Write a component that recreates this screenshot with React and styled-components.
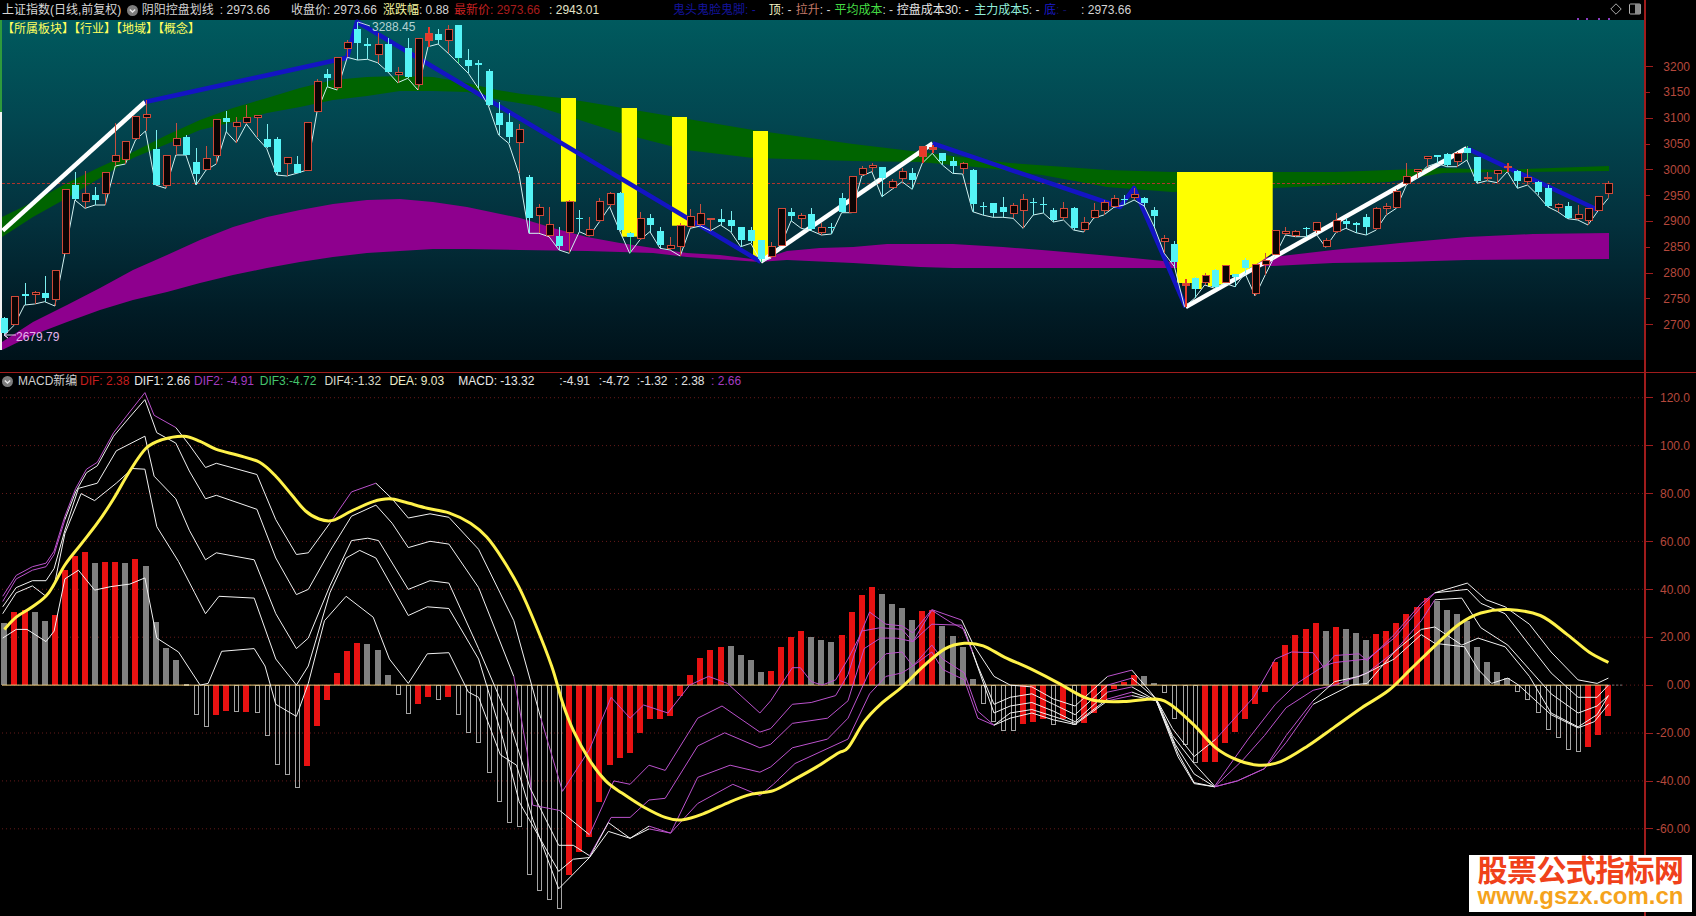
import React from 'react'
import styled, { createGlobalStyle } from 'styled-components'

const AXIS_RED = '#a01c1c'
const LABEL_RED = '#b5483c'
const BAND_GREEN = '#006400'
const BAND_PURPLE = '#8e008e'
const BLUE = '#1414c4'
const CYAN = '#55f4f6'
const WHITE = '#f2f2f2'
const PURPLE = '#bb52cc'

const GlobalStyle = createGlobalStyle`
  html, body {
    margin: 0;
    padding: 0;
    background: #000;
    overflow: hidden;
  }
  body {
    font-family: "Liberation Sans", "Noto Sans CJK SC", sans-serif;
    font-size: 12px;
  }
`

const Page = styled.div`
  position: relative;
  width: 1696px;
  height: 916px;
  background: #000;
  display: flex;
  flex-direction: column;
  overflow: hidden;
`
const Pane = styled.section`
  display: grid;
  grid-template-columns: 1644px 52px;
  height: ${props => props.$height}px;
`
const PaneMain = styled.div`
  display: flex;
  flex-direction: column;
  min-width: 0;
`
const PaneGap = styled.div`
  height: 13px;
  box-sizing: border-box;
  border-bottom: 1px solid ${AXIS_RED};
  background: linear-gradient(${AXIS_RED}, ${AXIS_RED}) 1644px 0 / 2px 100% no-repeat;
`
const HeaderBar = styled.header`
  position: relative;
  height: 20px;
  box-sizing: border-box;
  flex: none;
  display: flex;
  align-items: center;
  padding-left: 2px;
  padding-bottom: ${props => props.$lift || 0}px;
  white-space: nowrap;
  line-height: 16px;
`
const Field = styled.span`
  flex: none;
  margin-left: ${props => props.$ml || 0}px;
  color: ${props => props.$color || '#d4d4d4'};
`
const IconSlot = styled.span`
  flex: none;
  display: flex;
  margin-left: ${props => props.$ml || 0}px;
`
const Value = styled.span`
  color: ${props => props.$color || '#d4d4d4'};
`
const ToolIcons = styled.div`
  position: absolute;
  top: 3px;
  right: 3px;
  display: flex;
  align-items: center;
  gap: 7px;
`
const ChartArea = styled.div`
  position: relative;
  flex: 1;
  background: ${props => props.$bg};
`
const ChartSvg = styled.svg`
  display: block;
  overflow: visible;
`
const ChartLabel = styled.text`
  fill: ${props => props.$color};
  font-size: 12px;
`
const SectorTags = styled.div`
  position: absolute;
  left: 2px;
  top: 1px;
  line-height: 17px;
  color: #ffff5e;
  white-space: nowrap;
`
const Axis = styled.aside`
  border-left: 2px solid ${AXIS_RED};
  padding-top: ${props => props.$top}px;
  box-sizing: border-box;
  display: flex;
  flex-direction: column;
`
const AxisRow = styled.div`
  flex: none;
  height: ${props => props.$step}px;
  display: flex;
  align-items: center;
  justify-content: space-between;
  padding-right: 6px;
  color: ${LABEL_RED};

  &::before {
    content: '';
    width: ${props => (props.$major ? 7 : 4)}px;
    height: 1px;
    background: ${AXIS_RED};
  }
`
const Watermark = styled.div`
  position: absolute;
  left: 1469px;
  top: 855px;
  width: 223px;
  height: 57px;
  background: #fff;
  display: flex;
  flex-direction: column;
  align-items: center;
  font-weight: 700;
`
const WatermarkTitle = styled.div`
  color: #f0411a;
  font-size: 30px;
  line-height: 32px;
  letter-spacing: -0.6px;
  font-family: "Liberation Sans", "Noto Sans CJK SC", sans-serif;
`
const WatermarkUrl = styled.div`
  color: #f5a31c;
  font-size: 24px;
  line-height: 18px;
  font-family: "Liberation Sans", sans-serif;
`

// candle tables are [kind, high, top, bottom, low], y traced from the reference crops
const CANDLES_A = [
  ['d',890,895,940,945],['u',830,830,913,915],['d',790,822,828,855],['u',812,818,822,852],['d',768,820,835,845],
  ['u',752,752,838,858],['u',508,508,700,700],['d',455,495,538,540],['u',452,520,543,565],['d',502,525,540,555],
  ['u',458,458,520,555],['u',310,406,425,438],['u',364,364,418,432],['u',290,290,356,360],['u',240,284,291,333],
  ['d',330,388,495,495],['u',406,406,497,505],['u',308,355,375,405],['d',345,352,405,405],['d',385,427,462,495],
  ['u',378,416,448,450],['u',298,298,406,432],['d',272,294,305,335],['u',292,308,320,368],['u',255,292,306,312],
  ['u',285,286,292,352],['d',312,358,382,385],['d',350,357,455,465],['u',410,412,430,468],['d',408,433,458,460],
  ['u',308,308,450,450],['u',178,184,275,275],['d',148,162,174,200],['u',112,112,203,210],['u',60,68,86,112],
  ['d',5,28,70,120],['d',55,72,78,118],['u',40,73,102,128],['d',55,72,155,155],['u',140,157,163,188],
  ['d',55,85,170,175],['u',55,55,193,210],['r',20,40,62,80],['d',28,42,60,72],['u',15,28,62,100],
  ['g',15,15,115,130],['d',88,120,138,160],['d',120,130,134,205],['d',148,153,255,258],['d',245,280,315,345],
  ['d',280,307,350,370],['u',312,328,368,460],
]
const CANDLES_B = [
  ['d',225,232,354,400],['u',312,322,345,400],['u',322,374,405,410],['d',380,408,438,450],['u',300,305,396,460],
  ['d',330,353,357,395],['u',352,388,406,408],['u',295,304,360,365],['u',275,279,313,320],['d',275,278,390,392],
  ['g',395,398,410,460],['u',335,355,415,420],['d',342,355,375,395],['d',380,392,435,445],['u',410,436,446,450],
  ['u',368,376,438,468],['u',328,350,380,385],['u',312,341,374,378],['u',355,355,358,392],['d',328,358,365,375],
  ['d',332,361,377,395],['d',381,382,420,440],['d',380,391,422,430],['g',420,421,476,485],['u',425,440,468,475],
  ['u',326,326,436,436],['d',325,336,348,362],['u',338,346,356,385],['d',325,343,388,392],['u',368,383,396,405],
  ['d',368,380,382,402],['d',280,295,335,338],['u',228,230,338,338],['u',198,205,224,228],['u',190,197,202,215],
  ['d',200,202,235,290],['u',238,245,263,268],['u',205,215,236,245],['d',205,220,240,268],['r',138,140,168,190],
  ['r',135,142,148,160],['d',158,160,182,195],['d',172,184,197,220],['u',185,190,204,222],['d',208,210,312,335],
  ['d',305,319,321,345],['d',308,310,339,352],['d',292,320,335,352],['u',308,317,340,355],['u',282,298,330,385],
  ['d',295,306,308,345],
]
const CANDLES_C = [
  ['d',230,252,254,279],['d',264,270,300,306],['u',246,264,291,300],['d',261,264,324,330],['u',291,306,327,336],
  ['u',249,270,291,294],['u',240,248,270,285],['u',225,235,260,262],['d',225,236,240,255],['u',205,223,233,240],
  ['d',232,235,250,258],['d',262,270,288,320],['u',345,355,365,400],['d',362,372,425,440],['r',478,490,497,560],
  ['d',470,475,508,535],['u',460,466,488,495],['d',448,450,500,505],['u',435,436,488,490],['d',462,463,470,500],
  ['d',415,420,445,460],['u',432,434,520,528],['u',400,422,433,465],['u',332,332,403,405],['u',320,333,340,345],
  ['u',330,334,345,350],['d',322,323,325,350],['u',305,308,330,340],['u',355,362,380,382],['u',278,302,334,338],
  ['d',295,302,312,325],['d',305,310,316,338],['d',282,292,322,345],['u',262,265,325,330],['u',250,258,264,285],
  ['u',208,214,262,265],['u',128,170,190,195],['u',148,148,155,175],['u',108,110,116,140],['d',105,106,112,130],
  ['d',100,102,135,140],['u',96,100,124,140],['g',78,85,98,120],['d',110,112,184,190],['u',155,172,175,182],
  ['u',150,152,160,188],['r',130,140,143,155],['d',150,152,182,205],['u',148,172,183,195],['d',183,185,215,225],
  ['d',195,205,258,260],['u',250,254,262,275],['d',247,258,293,296],['u',255,284,296,300],['u',266,266,301,315],
  ['u',230,230,270,272],['u',182,190,220,235],
]

const toPageY = (table, base) =>
  table.map(([kind, ...ys]) => [kind, ...ys.map(y => base + y / 3)])

const CANDLES = [
  ...toPageY(CANDLES_A, 20),
  ...toPageY(CANDLES_B, 100),
  ...toPageY(CANDLES_C, 120),
]

const candleX = i => 4.33 + 10.087 * i

const CLOSE_LINE = CANDLES.map((c, i) => `${candleX(i).toFixed(1)},${c[4].toFixed(1)}`).join(' ')

const GREEN_BAND = '2,217 33,202 67,183 100,167 133,152 167,135 200,120 233,108 267,98 300,88 333,80 367,77 400,76 433,77 467,83 497,90 522,94 562,98 587,102 676,117 753,130 853,144 920,152 1010,163 1107,170 1172,172 1275,172 1335,172 1389,170 1443,168 1497,170 1524,169 1609,166 1609,171 1524,172 1497,172 1443,173 1389,182 1335,185 1275,188 1172,192 1107,187 1042,175 986,168 920,162 853,161 753,158 686,150 620,133 536,106 500,100 467,92 433,91 400,91 367,96 333,100 300,107 267,113 233,122 200,130 167,144 133,158 100,178 67,198 33,217 2,237'
const PURPLE_BAND = '2,342 33,322 67,305 100,288 133,270 167,255 200,240 233,227 267,217 300,210 333,204 367,200 400,199 433,202 467,207 520,218 553,228 587,237 620,243 653,248 687,253 720,255 760,260 787,251 820,248 853,247 887,244 953,244 1003,247 1042,250 1100,255 1133,258 1173,262 1273,257 1333,250 1400,243 1467,237 1533,234 1609,233 1609,259 1467,260 1400,262 1333,263 1273,266 1173,268 1133,268 1100,268 1042,268 1003,268 953,268 920,267 853,263 787,260 760,262 687,257 653,253 587,251 520,250 467,249 433,249 400,251 367,253 333,257 300,262 267,268 233,275 200,283 167,292 133,300 100,310 67,322 33,335 2,350'

const YELLOW_BARS = [
  [561, 98, 15, 103.7],
  [621.7, 108, 15.3, 128.7],
  [672, 117, 15, 108.7],
  [753, 131, 15, 129],
]
const YELLOW_BLOCK = '1177,172 1272.7,172 1272.7,253 1260,262 1250,268 1243,275 1228,275 1228,283 1208,287 1208,283 1201.7,283 1201.7,289 1191.7,289 1191.7,283 1177,283'

const THICK_LINES = [
  { color: '#fff', pts: '2.7,230.7 145,102' },
  { color: BLUE, pts: '145,102 347,57.7 357,21.7 760.7,261.7' },
  { color: '#fff', pts: '760.7,261.7 932.7,143.3' },
  { color: BLUE, pts: '932.7,143.3 1120,207 1134,188 1185.7,307' },
  { color: '#fff', pts: '1185.7,307 1466.7,148.3' },
  { color: BLUE, pts: '1466.7,148.3 1598,210' },
]

const PRICE_TICKS = [3200, 3150, 3100, 3050, 3000, 2950, 2900, 2850, 2800, 2750, 2700]
const MACD_TICKS = ['120.0', '100.0', '80.00', '60.00', '40.00', '20.00', '0.00', '-20.00', '-40.00', '-60.00']

const HIST = 'g728 r695 r690 g695 g722 r705 r575 r535 r522 g553 r552 r550 g553 r543 g563 g725 g798 g832 o903 o990 o1023 r990 r978 o980 r982 o985 o1050 o1132 o1162 o1200 r1137 r1022 r947 r870 r807 r785 g788 g805 g876 o932 o987 r958 r940 o945 r940 o990 o1040 o1070 o1155 o1240 o1300 o1310 o1450 o1495 o1520 o1548 r1450 r1385 r1340 r1240 r1135 r1115 r1100 r1042 r1002 r1002 r993 r935 r875 r828 r805 r795 g793 g818 g832 g867 r865 r795 r767 r750 g767 g775 g782 r760 r695 r645 r622 g643 g672 g683 g718 r692 r688 g735 g765 g795 g888 o958 o1010 o1035 o1035 r1018 r1010 r1002 o1018 r1002 o1018 r1015 r985 r948 r915 r895 r875 g878 g900 o925 o1000 o1075 o1128 r1125 r1125 r1070 r1040 r1002 r960 r925 r838 r790 r760 r745 r728 g750 r737 g745 g755 g775 r758 r750 r728 r700 r680 r655 g663 g690 g700 g720 g795 g840 g868 g885 o922 o945 o985 o1032 o1055 o1090 o1095 r1083 r1047 r995'
  .split(' ')
  .map(s => [s[0], Number(s.slice(1))])

const macdY = y => 370 + y / 2.872
const ZERO_Y = macdY(905)
const GRID_STEP = 47.9

const parsePts = (text, offset) =>
  text.trim().split(/\s+/).map(p => {
    const [x, y] = p.split(',').map(Number)
    return [offset + x / 1.849, macdY(y)]
  })

// the left and right crops were read apart, hence two point strings per line
const traced = (left, right) => [...parsePts(left, 0), ...parsePts(right, 848)]

const toPoints = pts => pts.map(([x, y]) => `${x.toFixed(1)},${y.toFixed(1)}`).join(' ')

// catmull-rom through the traced points, the signal line is a soft curve
const smoothPath = pts =>
  pts.reduce((d, p, i) => {
    if (i === 0) return `M${p[0].toFixed(1)} ${p[1].toFixed(1)}`
    const p0 = pts[i - 2] || pts[i - 1]
    const p1 = pts[i - 1]
    const p3 = pts[i + 1] || p
    const c1 = [p1[0] + (p[0] - p0[0]) / 6, p1[1] + (p[1] - p0[1]) / 6]
    const c2 = [p[0] - (p3[0] - p1[0]) / 6, p[1] - (p3[1] - p1[1]) / 6]
    return `${d} C${c1[0].toFixed(1)} ${c1[1].toFixed(1)} ${c2[0].toFixed(1)} ${c2[1].toFixed(1)} ${p[0].toFixed(1)} ${p[1].toFixed(1)}`
  }, '')

const DEA_PATH = smoothPath(traced(
  '8,745 30,710 60,680 90,640 120,560 150,500 180,440 210,370 240,290 270,225 300,200 340,190 370,205 400,228 440,245 480,265 510,305 540,360 565,405 590,428 615,432 650,405 690,378 720,370 750,380 790,397 830,410 870,440 900,480 930,545 960,625 990,730 1020,850 1040,955 1060,1035 1090,1120 1120,1180 1150,1215 1190,1255 1230,1285 1260,1292 1300,1275 1350,1240 1390,1218 1430,1208 1470,1175 1510,1140 1550,1100',
  '0,1085 30,1010 60,960 100,910 140,850 180,800 215,785 250,792 290,825 340,860 390,900 430,935 460,950 510,952 570,945 600,965 640,1020 680,1085 720,1120 760,1135 800,1125 850,1080 900,1025 950,970 1000,920 1040,860 1090,785 1130,730 1170,698 1220,688 1280,705 1330,760 1370,810 1406,840'
))

const DIF_LINES = [
  {
    pts: traced(
      '5,650 30,590 60,565 85,555 100,520 120,420 140,340 160,285 180,265 210,180 240,120 268,65 285,130 325,165 350,215 380,280 400,268 475,300 510,430 548,530 570,525 610,440 650,350 695,325 725,370 755,425 795,413 830,423 885,515 950,720 1000,1000 1040,1210 1090,1090 1130,940 1165,1000 1190,962 1235,985 1275,905 1310,880 1345,900 1405,985 1425,950 1465,855 1480,855 1500,895 1520,905 1545,890',
      '0,830 20,770 40,695 70,730 100,735 120,755 155,688 210,718 232,790 270,880 300,905 340,910 380,945 420,965 480,880 525,862 570,945 600,1030 640,1110 680,1060 750,940 790,830 820,810 860,812 880,855 900,820 945,815 960,835 1010,760 1060,670 1085,640 1145,612 1180,660 1215,680 1260,730 1300,810 1350,890 1385,900 1406,885'
    ),
    zones: [[189, PURPLE], [330, WHITE], [392, PURPLE], [562, WHITE], [973, PURPLE], [1108, WHITE], [1156, PURPLE], [1216, WHITE], [1467, PURPLE], [1700, WHITE]],
  },
  {
    pts: traced(
      '5,665 30,600 60,575 85,565 100,530 120,430 140,350 160,295 180,275 210,190 240,135 268,85 290,180 325,210 350,290 380,370 400,360 475,400 510,540 548,645 570,630 610,520 650,420 695,388 725,440 755,510 795,492 830,500 885,625 950,880 975,1100 985,1250 1035,1265 1090,1335 1135,1180 1165,1190 1200,1135 1230,1150 1290,1000 1335,965 1405,1040 1425,1030 1465,960 1500,955 1545,935',
      '0,875 25,750 60,740 100,745 120,780 155,690 190,725 215,745 240,850 270,960 300,940 340,930 380,960 420,990 480,905 525,885 570,945 600,1050 640,1130 678,1195 740,1060 790,960 830,900 860,870 880,850 900,840 960,830 1010,770 1060,680 1085,640 1145,630 1170,670 1215,700 1260,790 1300,870 1350,940 1385,940 1406,905'
    ),
    zones: [[65, PURPLE], [519, WHITE], [560, PURPLE], [590, WHITE], [973, PURPLE], [1108, WHITE], [1156, PURPLE], [1216, WHITE], [1467, PURPLE], [1700, WHITE]],
  },
  {
    pts: traced(
      '5,680 30,625 60,605 85,605 100,570 120,460 145,340 180,325 215,232 268,190 285,305 325,370 350,460 380,545 400,525 470,545 510,700 548,800 570,770 610,620 650,490 680,483 700,490 755,630 795,605 830,612 885,800 940,1000 980,1200 1033,1365 1060,1365 1090,1395 1130,1285 1165,1285 1200,1235 1230,1230 1290,1080 1340,1042 1405,1085 1425,1075 1465,1015 1530,1000',
      '0,950 30,800 60,770 90,770 120,780 155,730 210,733 230,810 270,985 300,965 340,955 380,980 420,1010 480,925 525,910 570,950 605,1075 640,1160 678,1197 730,1120 770,1050 810,970 860,920 900,905 960,870 1010,810 1060,720 1085,660 1135,655 1170,740 1220,790 1260,860 1300,930 1350,985 1385,965 1406,935'
    ),
    zones: [[590, WHITE], [973, PURPLE], [1108, WHITE], [1156, PURPLE], [1216, WHITE], [1435, PURPLE], [1700, WHITE]],
  },
  {
    pts: traced(
      '5,700 30,640 60,620 85,650 100,620 120,470 150,355 175,375 215,325 245,283 268,285 290,450 330,550 360,640 380,700 405,650 470,655 510,830 548,905 570,850 610,640 640,540 665,518 695,540 755,705 790,680 830,685 885,830 930,1060 960,1240 1033,1440 1060,1405 1090,1400 1125,1300 1165,1345 1200,1310 1240,1330 1290,1170 1350,1135 1405,1155 1425,1140 1465,1085 1530,1060',
      '0,1000 40,865 70,815 100,810 120,850 155,790 175,830 215,870 240,980 270,1020 300,985 340,975 380,995 420,1015 480,945 525,925 570,950 610,1100 640,1185 678,1197 720,1180 770,1145 810,1070 860,960 930,905 960,900 1010,810 1060,745 1085,738 1135,790 1165,770 1215,795 1260,880 1300,985 1350,1025 1385,990 1406,935'
    ),
    zones: [[670, WHITE], [1000, PURPLE], [1108, WHITE], [1156, PURPLE], [1216, WHITE], [1320, PURPLE], [1700, WHITE]],
  },
  {
    pts: traced(
      '5,770 30,745 50,745 85,780 100,750 120,600 145,575 175,632 205,622 240,615 268,597 290,770 330,810 370,905 385,900 410,808 470,800 490,850 510,960 548,995 570,900 600,720 640,650 690,710 720,830 755,900 790,815 830,812 866,925 885,940 925,1105 955,1135 985,1290 1033,1490 1090,1400 1125,1325 1165,1345 1200,1318 1240,1330 1290,1245 1355,1190 1405,1222 1430,1190 1470,1130',
      '0,1060 40,930 70,880 100,870 120,850 155,810 175,860 215,890 240,1000 270,1020 300,1000 340,985 380,1005 420,1018 480,950 525,935 570,950 610,1110 640,1188 678,1197 720,1180 770,1145 810,1050 860,950 900,895 945,880 960,870 1010,830 1060,760 1085,785 1140,795 1165,860 1190,900 1220,885 1240,905 1300,990 1350,1028 1380,1010 1406,960'
    ),
    zones: [[670, WHITE], [1000, PURPLE], [1108, WHITE], [1156, PURPLE], [1216, WHITE], [1330, PURPLE], [1700, WHITE]],
  },
]

// cut one traced line into coloured runs, neighbours share their end point
const splitZones = ({ pts, zones }) => {
  let start = 0
  return zones.map(([xEnd, color]) => {
    let end = start
    while (end < pts.length - 1 && pts[end + 1][0] <= xEnd) end++
    const run = pts.slice(start, end + 1)
    start = end
    return { color, points: toPoints(run) }
  })
}

const Chevron = () => (
  <svg width="11" height="11" viewBox="0 0 11 11">
    <circle cx="5.5" cy="5.5" r="5.5" fill="#7d7d7d" />
    <path d="M2.8 4.4 L5.5 7 L8.2 4.4" fill="none" stroke="#e8e8e8" strokeWidth="1.4" />
  </svg>
)

const Candle = ({ i, kind, high, top, bottom, low }) => {
  const x = Math.round(candleX(i)) + 0.5
  const wick = kind === 'u' ? '#c8503f' : kind === 'r' ? '#e8382a' : kind === 'g' ? '#2ce070' : '#7ceff0'
  const rectH = Math.max(bottom - top, 1)
  return (
    <g shapeRendering="crispEdges">
      <line x1={x} x2={x} y1={high} y2={low} stroke={wick} strokeWidth={kind === 'r' ? 2 : 1} />
      {kind === 'u' || kind === 'r' ? (
        <rect x={x - 3.5} y={top} width={7} height={rectH} fill={kind === 'r' ? '#e8382a' : '#0c0404'} stroke="#cf4a3a" strokeWidth="1" />
      ) : (
        <rect x={x - 3.5} y={top} width={7} height={rectH} fill={CYAN} />
      )}
    </g>
  )
}

const KlineChart = () => (
  <ChartSvg width="1644" height="340" viewBox="0 20 1644 340">
    <rect x="0" y="20" width="2" height="92" fill="#2f9a3c" />
    <rect x="0" y="112" width="2" height="238" fill="#f2f2f2" />
    <polygon points={GREEN_BAND} fill={BAND_GREEN} />
    <polygon points={PURPLE_BAND} fill={BAND_PURPLE} />
    <line x1="2" x2="1608" y1="183.5" y2="183.5" stroke="#b0342c" strokeDasharray="3 2" />
    {YELLOW_BARS.map(([x, y, w, h]) => (
      <rect key={x} x={x} y={y} width={w} height={h} fill="#ffff00" />
    ))}
    <polygon points={YELLOW_BLOCK} fill="#ffff00" />
    {THICK_LINES.map(l => (
      <polyline key={l.pts} points={l.pts} fill="none" stroke={l.color} strokeWidth="4.5" strokeLinejoin="round" />
    ))}
    <polyline points={CLOSE_LINE} fill="none" stroke="#d2f2f2" strokeWidth="1" />
    {CANDLES.map(([kind, high, top, bottom, low], i) => (
      <Candle key={i} i={i} kind={kind} high={high} top={top} bottom={bottom} low={low} />
    ))}
    <polyline points="358,22 370,26" fill="none" stroke="#b9d4d4" />
    <ChartLabel x="372" y="31" $color="#b4d2d2">3288.45</ChartLabel>
    <polyline points="8,332 4,335 8,338 4,335 16,335" fill="none" stroke="#e8c8ee" />
    <ChartLabel x="16" y="341" $color="#e4b4ec">2679.79</ChartLabel>
    {[1577, 1586, 1598, 1608].map(x => (
      <rect key={x} x={x} y="18" width="2" height="2" fill="#8a3cc0" />
    ))}
  </ChartSvg>
)

const MacdChart = () => (
  <ChartSvg width="1644" height="523" viewBox="0 393 1644 523">
    {MACD_TICKS.map((t, k) => (
      <line key={t} x1="2" x2="1644" y1={ZERO_Y + (k - 6) * GRID_STEP} y2={ZERO_Y + (k - 6) * GRID_STEP} stroke="#661a1a" strokeDasharray="1 3" />
    ))}
    {HIST.map(([kind, y], i) => {
      const x = Math.round(candleX(i))
      const top = Math.min(macdY(y), ZERO_Y)
      const h = Math.abs(macdY(y) - ZERO_Y)
      if (kind === 'o') {
        return <rect key={i} x={x - 2} y={top} width={4} height={h} fill="none" stroke="#a4a4a4" shapeRendering="crispEdges" />
      }
      return <rect key={i} x={x - 3} y={top} width={6} height={h} fill={kind === 'r' ? '#e81212' : '#808080'} shapeRendering="crispEdges" />
    })}
    <line x1="2" x2="1608" y1={ZERO_Y} y2={ZERO_Y} stroke="#eccf7c" />
    <line x1="1608" x2="1622" y1={ZERO_Y} y2={ZERO_Y} stroke="#777" strokeDasharray="2 2" />
    {DIF_LINES.flatMap((line, n) =>
      splitZones(line).map((run, k) => (
        <polyline key={`${n}-${k}`} points={run.points} fill="none" stroke={run.color} strokeWidth="1" />
      ))
    )}
    <path d={DEA_PATH} fill="none" stroke="#fff24a" strokeWidth="3" strokeLinejoin="round" />
  </ChartSvg>
)

const App = () => (
  <Page>
    <GlobalStyle />
    <Pane $height={360}>
      <PaneMain>
        <HeaderBar>
          <Field $color="#d8d8d8">上证指数(日线,前复权)</Field>
          <IconSlot $ml={6}><Chevron /></IconSlot>
          <Field $ml={3.5}>阴阳控盘划线</Field>
          <Field $ml={6}>: 2973.66</Field>
          <Field $ml={21}>收盘价: 2973.66</Field>
          <Field $ml={6} $color="#f6f6a0">涨跌幅<Value>: 0.88</Value></Field>
          <Field $ml={5} $color="#c62020">最新价: <Value $color="#a81c1c">2973.66</Value></Field>
          <Field $ml={9} $color="#e4e4c8">: 2943.01</Field>
          <Field $ml={74} $color="#14149c">鬼头鬼脸鬼脚: -</Field>
          <Field $ml={13} $color="#f4f4c4">顶<Value>: -</Value></Field>
          <Field $ml={4.3} $color="#c47a68">拉升<Value>: -</Value></Field>
          <Field $ml={4} $color="#44dc44">平均成本<Value>: -</Value></Field>
          <Field $ml={3.5} $color="#e6e6e6">控盘成本30: -</Field>
          <Field $ml={5.5} $color="#90eedc">主力成本5<Value>: -</Value></Field>
          <Field $ml={4.6} $color="#1a1ac8">底<Value $color="#101060">: -</Value></Field>
          <Field $ml={14.3}>: 2973.66</Field>
          <ToolIcons>
            <svg width="12" height="12" viewBox="0 0 12 12">
              <path d="M6 .8 L11.2 6 L6 11.2 L.8 6 Z" fill="none" stroke="#a8a8a8" />
            </svg>
            <svg width="12" height="12" viewBox="0 0 12 12">
              <rect x=".5" y="1" width="11" height="10" rx="1" fill="none" stroke="#b0b0b0" />
              <rect x="6" y="1" width="5.5" height="10" fill="#8c8c8c" />
            </svg>
          </ToolIcons>
        </HeaderBar>
        <ChartArea $bg="linear-gradient(180deg, #005a5e 0%, #024650 30%, #03303c 60%, #011c26 85%, #00121a 100%)">
          <KlineChart />
          <SectorTags>【所属板块】【行业】【地域】【概念】</SectorTags>
        </ChartArea>
      </PaneMain>
      <Axis $top={53.8}>
        {PRICE_TICKS.map((t, k) => (
          <AxisRow key={t} $step={25.8} $major={k % 2 === 0}>{t}</AxisRow>
        ))}
      </Axis>
    </Pane>
    <PaneGap />
    <Pane $height={543}>
      <PaneMain>
        <HeaderBar $lift={4}>
          <Chevron />
          <Field $ml={5} $color="#cfcfcf">MACD新编</Field>
          <Field $ml={2.7} $color="#c41e1e">DIF: 2.38</Field>
          <Field $ml={4.8} $color="#e8e8e8">DIF1: 2.66</Field>
          <Field $ml={3.8} $color="#a43cc0">DIF2: -4.91</Field>
          <Field $ml={5.7} $color="#44c46c">DIF3:-4.72</Field>
          <Field $ml={8} $color="#d8d8c8">DIF4:-1.32</Field>
          <Field $ml={8.3} $color="#ececc8">DEA: 9.03</Field>
          <Field $ml={14.2} $color="#e8e8e8">MACD: -13.32</Field>
          <Field $ml={25} $color="#e0e0e0">:-4.91</Field>
          <Field $ml={8.8} $color="#e0e0e0">:-4.72</Field>
          <Field $ml={7.3} $color="#e0e0e0">:-1.32</Field>
          <Field $ml={7} $color="#e0e0e0">: 2.38</Field>
          <Field $ml={6.5} $color="#a43cc0">: 2.66</Field>
        </HeaderBar>
        <ChartArea $bg="#000">
          <MacdChart />
        </ChartArea>
      </PaneMain>
      <Axis $top={1}>
        {MACD_TICKS.map(t => (
          <AxisRow key={t} $step={47.9} $major>{t}</AxisRow>
        ))}
      </Axis>
    </Pane>
    <Watermark>
      <WatermarkTitle>股票公式指标网</WatermarkTitle>
      <WatermarkUrl>www.gszx.com.cn</WatermarkUrl>
    </Watermark>
  </Page>
)

export default App
